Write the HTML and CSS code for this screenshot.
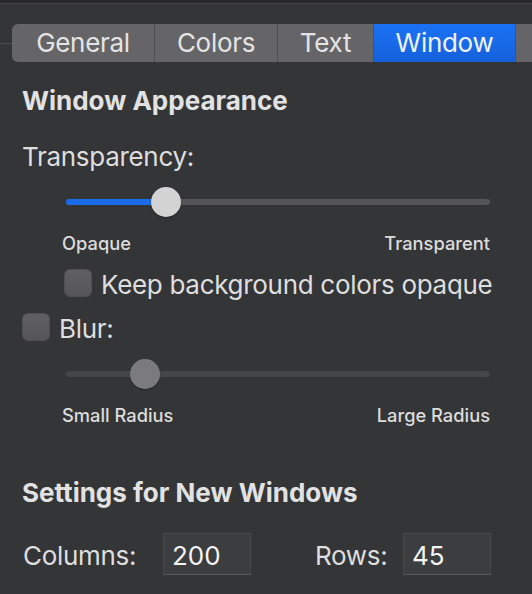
FILE: index.html
```html
<!DOCTYPE html>
<html lang="en">
<head>
<meta charset="utf-8">
<title>Window Preferences</title>
<link rel="stylesheet" href="styles.css">
</head>
<body>
<div class="topbar"></div>
<div class="tabrow">
  <div class="tabline"></div>
  <div class="tabs">
    <div class="tab tab-general">General</div>
    <div class="tab tab-colors">Colors</div>
    <div class="tab tab-text">Text</div>
    <div class="tab tab-window active">Window</div>
    <div class="tab tab-more"></div>
  </div>
</div>
<div class="content">
  <h2 class="heading heading-first">Window Appearance</h2>
  <div class="label label-transparency">Transparency:</div>
  <div class="slider slider-transparency">
    <div class="track"><div class="fill" style="width: 100px"></div></div>
    <div class="knob" style="left: 85px"></div>
  </div>
  <div class="ends ends-first"><span>Opaque</span><span>Transparent</span></div>
  <div class="check check-keep">
    <span class="box"></span>
    <span class="check-text">Keep background colors opaque</span>
  </div>
  <div class="check check-blur">
    <span class="box"></span>
    <span class="check-text">Blur:</span>
  </div>
  <div class="slider slider-blur disabled">
    <div class="track"></div>
    <div class="knob" style="left: 64px"></div>
  </div>
  <div class="ends ends-second"><span>Small Radius</span><span>Large Radius</span></div>
  <h2 class="heading heading-second">Settings for New Windows</h2>
  <div class="sizes">
    <span class="size-label size-columns">Columns:</span>
    <span class="field">200</span>
    <span class="size-label size-rows">Rows:</span>
    <span class="field">45</span>
  </div>
</div>
</body>
</html>
```

FILE: styles.css
```css
html, body {
  margin: 0;
  padding: 0;
  background: #343537;
  overflow: hidden;
}
body {
  width: 532px;
  height: 594px;
  font-family: "Inter", "Noto Sans", sans-serif;
  color: #dedede;
}
.topbar {
  height: 3px;
  background: #29292b;
  border-bottom: 1px solid #444547;
}
.tabrow {
  display: flex;
  align-items: center;
  margin-top: 20px;
  height: 38px;
}
.tabline {
  width: 12px;
  height: 1px;
  background: #4a4b4d;
}
.tabs {
  display: flex;
  height: 38px;
  flex: 1;
  border-radius: 6px 0 0 6px;
  overflow: hidden;
  background: #656567;
}
.tab {
  display: flex;
  align-items: center;
  justify-content: center;
  height: 38px;
  font-size: 26px;
  letter-spacing: -0.3px;
  color: #e4e4e4;
  box-sizing: border-box;
  border-right: 1px solid #505052;
  padding-bottom: 1px;
}
.tab-general { width: 143px; }
.tab-colors { width: 123px; }
.tab-text { width: 96px; }
.tab-window { width: 142px; }
.tab-more { flex: 1; border-right: 0; }
.tab.active {
  background: linear-gradient(#1b72f4, #1560da);
  color: #eef3fd;
  border-right: 1px solid #1558c8;
}
.content {
  padding-left: 22px;
}
.heading {
  margin: 0;
  font-size: 26px;
  font-weight: 700;
  line-height: 32px;
  color: #e2e2e2;
}
.heading-first { margin-top: 23px; }
.heading-second { margin-top: 50px; }
.label {
  font-size: 26px;
  letter-spacing: -0.3px;
  line-height: 32px;
}
.label-transparency { margin-top: 24px; }
.slider {
  position: relative;
  margin-left: 44px;
  width: 424px;
  height: 30px;
  margin-top: 14px;
}
.track {
  position: absolute;
  left: 0;
  right: 0;
  top: 12px;
  height: 6px;
  border-radius: 3px;
  background: #555557;
  overflow: hidden;
}
.fill {
  height: 100%;
  background: #1b6ce8;
}
.knob {
  position: absolute;
  top: 0;
  width: 30px;
  height: 30px;
  border-radius: 50%;
  background: #d3d3d3;
  box-shadow: 0 1px 2px rgba(0,0,0,0.35);
}
.slider.disabled .track { background: #454648; }
.slider.disabled .knob { background: #7b7b7d; box-shadow: 0 1px 1px rgba(0,0,0,0.25); }
.ends {
  display: flex;
  justify-content: space-between;
  margin-left: 40px;
  width: 428px;
  margin-top: 14px;
  font-size: 18.3px;
  font-weight: 500;
  line-height: 24px;
  color: #dcdcdc;
}
.check {
  display: flex;
  align-items: flex-start;
  gap: 9px;
}
.box {
  width: 28px;
  height: 28px;
  box-sizing: border-box;
  border-radius: 6px;
  background: linear-gradient(#606062, #555557);
  border: 1px solid #505052;
}
.check-text {
  font-size: 26px;
  letter-spacing: -0.3px;
  line-height: 32px;
}
.check-keep { margin-left: 42px; margin-top: 14px; }
.check-blur { margin-top: 12px; }
.sizes {
  display: flex;
  align-items: center;
  margin-top: 24px;
  height: 42px;
}
.size-label {
  font-size: 26px;
  letter-spacing: -0.3px;
  line-height: 42px;
  padding-top: 3px;
}
.size-columns { width: 140px; padding-left: 1px; }
.size-rows { width: 88px; margin-left: 64px; }
.field {
  box-sizing: border-box;
  width: 88px;
  height: 42px;
  padding-left: 8px;
  padding-top: 3px;
  font-size: 26px;
  line-height: 38px;
  color: #f4f4f4;
  background: #3c3d3f;
  border: 1px solid #48494b;
  border-bottom-color: #58595b;
}
```
